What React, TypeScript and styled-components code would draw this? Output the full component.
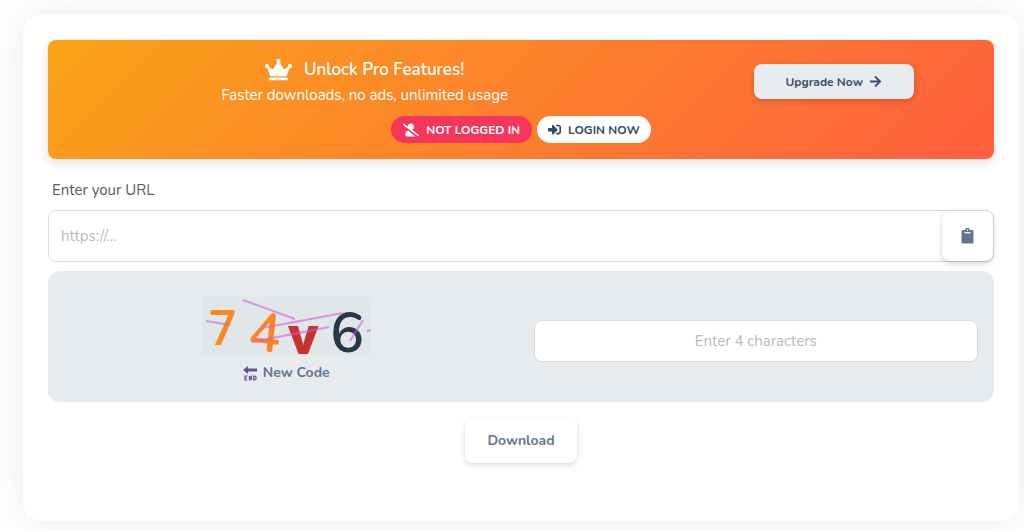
import React from 'react';
import styled, { createGlobalStyle } from 'styled-components';
import { FaCrown, FaUserSlash, FaSignInAlt, FaArrowRight } from 'react-icons/fa';

const GlobalStyle = createGlobalStyle`
  *, *::before, *::after { box-sizing: border-box; }
  body {
    margin: 0;
    background: #fff;
    color: #4a5568;
    font-family: Nunito, Lato, "Liberation Sans", sans-serif;
    font-size: 15px;
    line-height: 24px;
  }
  button, input { font: inherit; }
`;

const Card = styled.main`
  margin: 14px 5px 10px 23px;
  min-height: 507px;
  padding: 26px 25px;
  border-radius: 20px;
  background: #fff;
  box-shadow: 0 0 35px rgba(130, 150, 170, 0.18);
`;

const Banner = styled.section`
  padding: 16px 4px;
  border-radius: 8px;
  background: linear-gradient(135deg, #faa318 0%, #ff5f40 100%);
  box-shadow: 0 4px 12px rgba(0, 0, 0, 0.12);
  color: #fff;
`;

const BannerRow = styled.div`
  display: grid;
  grid-template-columns: 2fr 1fr;
  align-items: center;
  justify-items: center;
`;

const Pitch = styled.div`
  text-align: center;
`;

const Title = styled.h1`
  display: flex;
  align-items: center;
  justify-content: center;
  gap: 12px;
  margin: 0;
  font-size: 17px;
  line-height: 25px;
  font-weight: 600;
`;

const Tagline = styled.p`
  margin: 0;
`;

const UpgradeButton = styled.button`
  display: flex;
  align-items: center;
  justify-content: center;
  gap: 6px;
  width: 160px;
  height: 35px;
  border: 0;
  border-radius: 8px;
  background: #e8ecef;
  color: #3b4f6e;
  font-size: 12px;
  font-weight: 700;
  box-shadow: 0 2px 6px rgba(0, 0, 0, 0.2);
`;

const Badges = styled.div`
  display: flex;
  justify-content: center;
  gap: 5px;
  margin-top: 9px;
`;

const badge = `
  display: flex;
  align-items: center;
  gap: 7px;
  height: 27px;
  padding: 0 11px;
  border-radius: 14px;
  font-size: 12px;
  font-weight: 700;
  white-space: nowrap;
`;

const StatusBadge = styled.span`
  ${badge}
  padding: 0 12px;
  background: #f5365c;
  color: #fff;
`;

const LoginBadge = styled.a`
  ${badge}
  background: #fff;
  color: #344767;
  text-decoration: none;
`;

const UrlLabel = styled.label`
  display: block;
  margin: 19px 4px 8px;
  color: #555b66;
`;

const UrlBox = styled.div`
  display: flex;
  height: 52px;
  border: 1px solid #d8dbde;
  border-radius: 8px;
`;

const TextInput = styled.input`
  flex: 1;
  min-width: 0;
  padding: 0 12px;
  border: 0;
  border-radius: 8px;
  background: #fff;
  color: #495057;
  &::placeholder { color: #b3bcc5; opacity: 1; }
`;

const PasteButton = styled.button`
  display: grid;
  place-items: center;
  width: 51px;
  padding: 0;
  border: 0;
  border-radius: 8px;
  background: #fff;
  color: #66758f;
  box-shadow: 0 3px 6px rgba(50, 50, 93, 0.16), 0 1px 3px rgba(0, 0, 0, 0.08);
`;

const CaptchaPanel = styled.section`
  display: grid;
  grid-template-columns: 1fr 1fr;
  gap: 25px;
  align-items: center;
  margin-top: 9px;
  padding: 24px 16px 16px;
  min-height: 131px;
  border-radius: 12px;
  background: #e8ebee;
`;

const CaptchaSide = styled.div`
  display: flex;
  flex-direction: column;
  align-items: center;
  gap: 6px;
`;

const CaptchaPicture = styled.svg`
  display: block;
  overflow: visible;
`;

const NewCode = styled.button`
  display: flex;
  align-items: center;
  gap: 6px;
  padding: 0;
  border: 0;
  background: none;
  color: #66758f;
  font-size: 14px;
  font-weight: 700;
  line-height: 24px;
`;

const CodeInput = styled(TextInput)`
  width: 100%;
  height: 42px;
  border: 1px solid #d8dbde;
  text-align: center;
`;

const DownloadButton = styled.button`
  display: block;
  height: 45px;
  margin: 16px auto 0;
  padding: 0 22px;
  border: 0;
  border-radius: 8px;
  background: #fff;
  color: #66758f;
  font-size: 14px;
  font-weight: 700;
  box-shadow: 0 3px 6px rgba(50, 50, 93, 0.12), 0 1px 3px rgba(0, 0, 0, 0.06);
`;

const CaptchaImage = () => (
  <CaptchaPicture width="169" height="58" viewBox="0 0 169 58" role="img" aria-label="Verification code">
    <rect width="169" height="58" fill="#e1e6e9" />
    <g fontWeight="600">
      <text x="7" y="48" fontSize="48" fontFamily="Open Sans, sans-serif" fill="#f98a1f">7</text>
      <text x="47" y="54" fontSize="54" fill="#ff8320" transform="rotate(6 62 34)">4</text>
      <text x="86" y="57" fontSize="50" fontWeight="800" fontFamily="Open Sans, sans-serif" fill="#c8342b">v</text>
      <text x="128" y="55" fontSize="57" fill="#263746">6</text>
    </g>
    <path
      d="M4 24 28 28M41 3 93 22M60 31 141 16M50 45 127 30M148 44 161 23M165 34 169 33"
      fill="none"
      stroke="#d45ae0"
      strokeOpacity="0.6"
      strokeWidth="2"
    />
  </CaptchaPicture>
);

const BackIcon = () => (
  <svg width="14" height="16" viewBox="0 0 14 16" aria-hidden="true">
    <path d="M0 5 5 1V3.500H14V6.500H5V9Z" fill="#5f5296" />
    <path
      d="M4.500 11H2V15H4.500M2 13H4M6.500 15.500V11L8.500 15V10.500M10.700 11V15H11.700L13 14V12L11.700 11Z"
      fill="none"
      stroke="#5f5296"
      strokeWidth="1.200"
    />
  </svg>
);

const ClipboardIcon = () => (
  <svg width="13" height="16" viewBox="0 0 13 16" aria-hidden="true">
    <path d="M1.500 2H4.300A2.200 2.200 0 0 1 8.700 2H11.500Q12.500 2 12.500 3V14.500Q12.500 15.500 11.500 15.500H1.500Q.5 15.500 .5 14.500V3Q.5 2 1.500 2Z" fill="#66758f" />
    <path d="M3.500 4.700H9.500" stroke="#fff" strokeWidth="1.200" />
    <circle cx="6.500" cy="2.200" r=".7" fill="#fff" />
  </svg>
);

export default function App() {
  return (
    <>
      <GlobalStyle />
      <Card>
        <Banner>
          <BannerRow>
            <Pitch>
              <Title><FaCrown size={27} />Unlock Pro Features!</Title>
              <Tagline>Faster downloads, no ads, unlimited usage</Tagline>
            </Pitch>
            <UpgradeButton type="button">Upgrade Now <FaArrowRight size={13} /></UpgradeButton>
          </BannerRow>
          <Badges>
            <StatusBadge><FaUserSlash size={16} />NOT LOGGED IN</StatusBadge>
            <LoginBadge href="#login"><FaSignInAlt size={13} />LOGIN NOW</LoginBadge>
          </Badges>
        </Banner>
        <UrlLabel htmlFor="url">Enter your URL</UrlLabel>
        <UrlBox>
          <TextInput id="url" type="url" placeholder="https://..." />
          <PasteButton type="button" aria-label="Paste"><ClipboardIcon /></PasteButton>
        </UrlBox>
        <CaptchaPanel>
          <CaptchaSide>
            <CaptchaImage />
            <NewCode type="button"><BackIcon />New Code</NewCode>
          </CaptchaSide>
          <CodeInput type="text" maxLength={4} aria-label="Verification code" placeholder="Enter 4 characters" />
        </CaptchaPanel>
        <DownloadButton type="button">Download</DownloadButton>
      </Card>
    </>
  );
}
